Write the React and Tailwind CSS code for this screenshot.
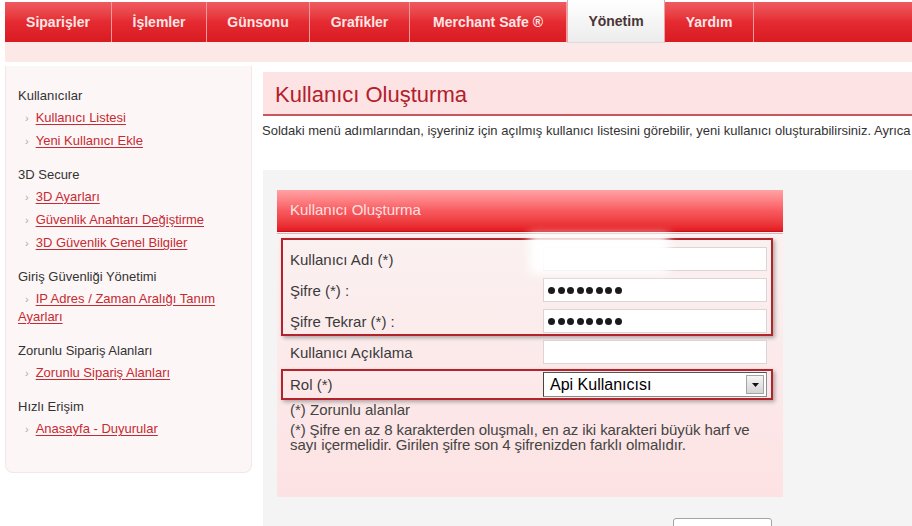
import React from "react";

const tabs = [
  { label: "Siparişler", w: "w-[107px]" },
  { label: "İşlemler", w: "w-[95px]" },
  { label: "Günsonu", w: "w-[103px]" },
  { label: "Grafikler", w: "w-[100px]" },
  { label: "Merchant Safe ®", w: "w-[157px]" },
  { label: "Yönetim", w: "w-[98px]", active: true },
  { label: "Yardım", w: "w-[89px]" },
];

const menu = [
  { title: "Kullanıcılar", links: ["Kullanıcı Listesi", "Yeni Kullanıcı Ekle"] },
  {
    title: "3D Secure",
    links: ["3D Ayarları", "Güvenlik Anahtarı Değiştirme", "3D Güvenlik Genel Bilgiler"],
  },
  { title: "Giriş Güvenliği Yönetimi", links: ["IP Adres / Zaman Aralığı Tanım Ayarları"] },
  { title: "Zorunlu Sipariş Alanları", links: ["Zorunlu Sipariş Alanları"] },
  { title: "Hızlı Erişim", links: ["Anasayfa - Duyurular"] },
];

function Dots() {
  return (
    <div className="flex items-center gap-[2.5px] pl-[4px]">
      {Array.from({ length: 8 }).map((_, i) => (
        <div key={i} className="w-[7px] h-[7px] rounded-full bg-[#1b1b1b]" />
      ))}
    </div>
  );
}

function Row({ label, children, h = "h-[24px]" }) {
  return (
    <div className={`flex items-center ${h}`}>
      <div className="flex-1 text-[15px] text-[#3a3a3a] leading-none">{label}</div>
      {children}
    </div>
  );
}

function Input({ children }) {
  return (
    <div className="w-[224px] h-full bg-white border border-[#ddd4d4] flex items-center">
      {children}
    </div>
  );
}

export default function App() {
  return (
    <div className="w-[912px] h-[526px] overflow-hidden bg-white font-['Liberation_Sans',Arial,sans-serif] flex flex-col">
      {/* top nav */}
      <div className="ml-[5px] mt-[2px] h-[40px] flex bg-gradient-to-b from-[#ee5a60] via-[#e52a31] to-[#d91a21] shrink-0">
        {tabs.map((t) =>
          t.active ? (
            <div
              key={t.label}
              className={`${t.w} h-[43px] -mt-[2px] relative z-10 bg-gradient-to-b from-[#ffffff] to-[#ececec] border-x border-[#e9a3a5] border-b border-b-[#dcdcdc] flex items-center justify-center text-[14px] font-bold text-[#4a3535]`}
            >
              {t.label}
            </div>
          ) : (
            <div
              key={t.label}
              className={`${t.w} h-full border-r border-[#f29a9d] flex items-center justify-center text-[14px] font-bold text-[#fde6e6]`}
            >
              {t.label}
            </div>
          )
        )}
        <div className="flex-1" />
      </div>
      <div className="ml-[5px] h-[20px] bg-[#fde8e8] shrink-0" />

      {/* body */}
      <div className="flex ml-[5px] flex-1 min-h-0">
        {/* sidebar */}
        <div className="w-[247px] self-start mt-[4px] bg-[#fdf6f6] border border-[#f4e6e6] border-t-0 rounded-b-[8px] pt-[21px] pb-[34px] px-[12px] text-[13px] leading-[18px]">
          <div className="flex flex-col gap-[16px]">
            {menu.map((s) => (
              <div key={s.title}>
                <div className="text-[#333]">{s.title}</div>
                <ul className="mt-[4px] flex flex-col gap-[5px]">
                  {s.links.map((l) => (
                    <li key={l}>
                      <span className="ml-[7px] mr-[7px] text-[11px] text-[#aaa]">›</span>
                      <a className="text-[#c62a33] underline decoration-[#c62a33] underline-offset-2 cursor-pointer">
                        {l}
                      </a>
                    </li>
                  ))}
                </ul>
              </div>
            ))}
          </div>
        </div>

        {/* main */}
        <div className="flex-1 ml-[11px] flex flex-col min-w-0">
          <div className="mt-[10px] h-[44px] bg-[#fde3e4] border-b-2 border-[#c8585c] flex items-center pl-[12px] pt-[2px] text-[22px] text-[#b3202b] shrink-0">
            Kullanıcı Oluşturma
          </div>
          <div className="mt-[6px] -ml-[1px] text-[13px] leading-[18px] text-[#333] whitespace-nowrap overflow-hidden shrink-0">
            Soldaki menü adımlarından, işyeriniz için açılmış kullanıcı listesini görebilir, yeni kullanıcı oluşturabilirsiniz. Ayrıca
          </div>

          <div className="mt-[30px] flex-1 bg-[#f4f4f4] pt-[20px] pl-[14px]">
            <div className="w-[506px]">
              <div className="h-[42px] bg-gradient-to-b from-[#ffa2a5] via-[#f85a60] to-[#e4161e] border-b border-[#b7161d] flex items-center pl-[13px] text-[15px] text-[#fde1e1]">
                Kullanıcı Oluşturma
              </div>
              <div className="mt-[1px] h-[1px] bg-[#f3aaad]" />

              <div className="relative h-[263px] bg-gradient-to-b from-[#fbf1f1] to-[#fde2e3] pt-[4px]">
                {/* box 1 */}
                <div className="ml-[4px] mr-[10px] border-2 border-[#b3232b] shadow-[2px_2px_4px_rgba(0,0,0,0.3)] pt-[7px] pb-[1px] pl-[7px] pr-[4px] flex flex-col gap-[7px]">
                  <Row label="Kullanıcı Adı (*)">
                    <Input />
                  </Row>
                  <Row label="Şifre (*) :">
                    <Input>
                      <Dots />
                    </Input>
                  </Row>
                  <Row label="Şifre Tekrar (*) :">
                    <Input>
                      <Dots />
                    </Input>
                  </Row>
                </div>

                <div className="mt-[4px] pl-[13px] pr-[16px]">
                  <Row label="Kullanıcı Açıklama">
                    <Input />
                  </Row>
                </div>

                {/* box 2 */}
                <div className="mt-[5px] ml-[4px] mr-[10px] border-2 border-[#b3232b] shadow-[2px_2px_4px_rgba(0,0,0,0.3)] py-[1px] pl-[7px] pr-[4px]">
                  <Row label="Rol (*)" h="h-[25px]">
                    <div className="w-[224px] h-full bg-white border border-[#8c8c8c] border-l-[#444] border-t-[#555] flex items-center justify-between pl-[6px] pr-[2px]">
                      <span className="text-[16px] text-black">Api Kullanıcısı</span>
                      <div className="w-[18px] h-[19px] bg-gradient-to-b from-[#f5f5f5] to-[#d4d4d4] border border-[#a5a5a5] flex items-center justify-center">
                        <svg width="7" height="4" viewBox="0 0 7 4">
                          <path d="M0 0h7L3.5 4z" fill="#111" />
                        </svg>
                      </div>
                    </div>
                  </Row>
                </div>

                <div className="pl-[13px] pr-[20px] text-[#444]">
                  <div className="mt-[1px] text-[15px] leading-[17px]">(*) Zorunlu alanlar</div>
                  <p className="mt-[4px] text-[15px] leading-[15px] w-[478px] tracking-[-0.1px]">
                    (*) Şifre en az 8 karakterden oluşmalı, en az iki karakteri büyük harf ve sayı içermelidir. Girilen şifre son 4 şifrenizden farklı olmalıdır.
                  </p>
                </div>

                {/* blurred username */}
                <div className="absolute left-[252px] top-[0px] w-[140px] h-[40px] bg-white/95 blur-[5px]" />
              </div>

              <div className="mt-[21px] flex justify-end pr-[11px]">
                <div className="w-[99px] h-[26px] bg-white border border-[#a3a3a3] rounded-[3px]" />
              </div>
            </div>
          </div>
        </div>
      </div>
    </div>
  );
}
